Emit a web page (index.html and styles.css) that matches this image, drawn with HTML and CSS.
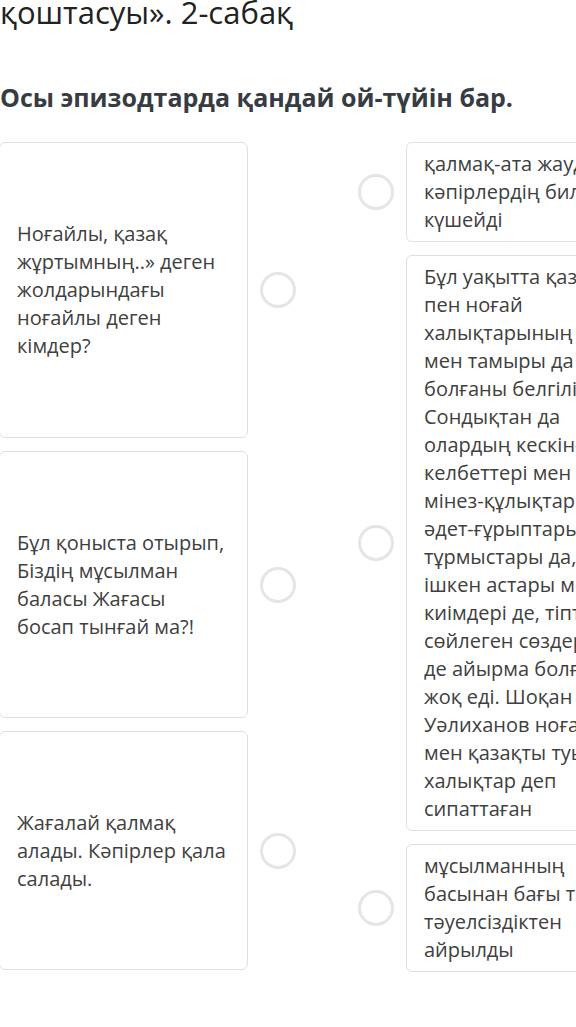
FILE: index.html
```html
<!DOCTYPE html>
<html lang="kk">
<head>
    <meta charset="UTF-8">
    <meta name="viewport" content="width=device-width, initial-scale=1.0">
    <title>қоштасуы». 2-сабақ</title>
    <link rel="stylesheet" href="styles.css">
</head>
<body>
    <div class="page">
        <h1 class="lesson-title">қоштасуы». 2-сабақ</h1>
        <h2 class="question">Осы эпизодтарда қандай ой-түйін бар.</h2>

        <div class="match">
            <!-- left side: prompts -->
            <div class="match-col left-col">
                <div class="match-row">
                    <div class="card">Ноғайлы, қазақ жұртымның..» деген жолдарындағы ноғайлы деген кімдер?</div>
                    <span class="dot"></span>
                </div>
                <div class="match-row">
                    <div class="card">Бұл қоныста отырып, Біздің мұсылман баласы Жағасы босап тынғай ма?!</div>
                    <span class="dot"></span>
                </div>
                <div class="match-row">
                    <div class="card">Жағалай қалмақ алады. Кәпірлер қала салады.</div>
                    <span class="dot"></span>
                </div>
            </div>

            <!-- right side: answers -->
            <div class="match-col right-col">
                <div class="match-row">
                    <span class="dot"></span>
                    <div class="card answer">қалмақ-ата жауды, кәпірлердің билігі күшейді</div>
                </div>
                <div class="match-row">
                    <span class="dot"></span>
                    <div class="card answer">Бұл уақытта қазақ пен ноғай халықтарының тегі мен тамыры да бір болғаны белгілі. Сондықтан да олардың кескін-келбеттері мен мінез-құлықтары, әдет-ғұрыптары, тұрмыстары да, ішкен астары мен киімдері де, тіпті сөйлеген сөздерінде де айырма болған жоқ еді. Шоқан Уәлиханов ноғай мен қазақты туыс халықтар деп сипаттаған</div>
                </div>
                <div class="match-row">
                    <span class="dot"></span>
                    <div class="card answer">мұсылманның басынан бағы тайды, тәуелсіздіктен айрылды</div>
                </div>
            </div>
        </div>
    </div>
</body>
</html>
```

FILE: styles.css
```css
body {
    font-family: "Open Sans", "Noto Sans", sans-serif;
    margin: 0;
    padding: 0;
    background-color: #ffffff;
    color: #404040;
    overflow: hidden;
}
.page {
    width: 700px;
}
.lesson-title {
    font-size: 31px;
    font-weight: 400;
    line-height: 40px;
    color: #222222;
    margin: -8px 0 0 0;
    white-space: nowrap;
}
.question {
    font-size: 25px;
    font-weight: 700;
    line-height: 34px;
    color: #373c43;
    margin: 48px 0 28px 0;
    white-space: nowrap;
}
.match {
    display: flex;
    gap: 62px;
    margin-left: -1px;
}
.match-col {
    display: flex;
    flex-direction: column;
}
.left-col {
    display: grid;
    grid-template-rows: 296px 267px 239px;
    row-gap: 13px;
}
.right-col {
    gap: 13px;
}
.match-row {
    display: flex;
    align-items: center;
    gap: 12px;
}
.card {
    box-sizing: border-box;
    width: 249px;
    border: 1px solid #dedfe0;
    border-radius: 6px;
    padding: 7px 20px 7px 17px;
    font-size: 20px;
    line-height: 28px;
    color: #404040;
}
.card.answer {
    padding-right: 22px;
}
.left-col .card {
    height: 100%;
    display: flex;
    align-items: center;
}
.dot {
    flex: none;
    width: 36px;
    height: 36px;
    box-sizing: border-box;
    border: 3px solid #e3e5e7;
    border-radius: 50%;
}
```
